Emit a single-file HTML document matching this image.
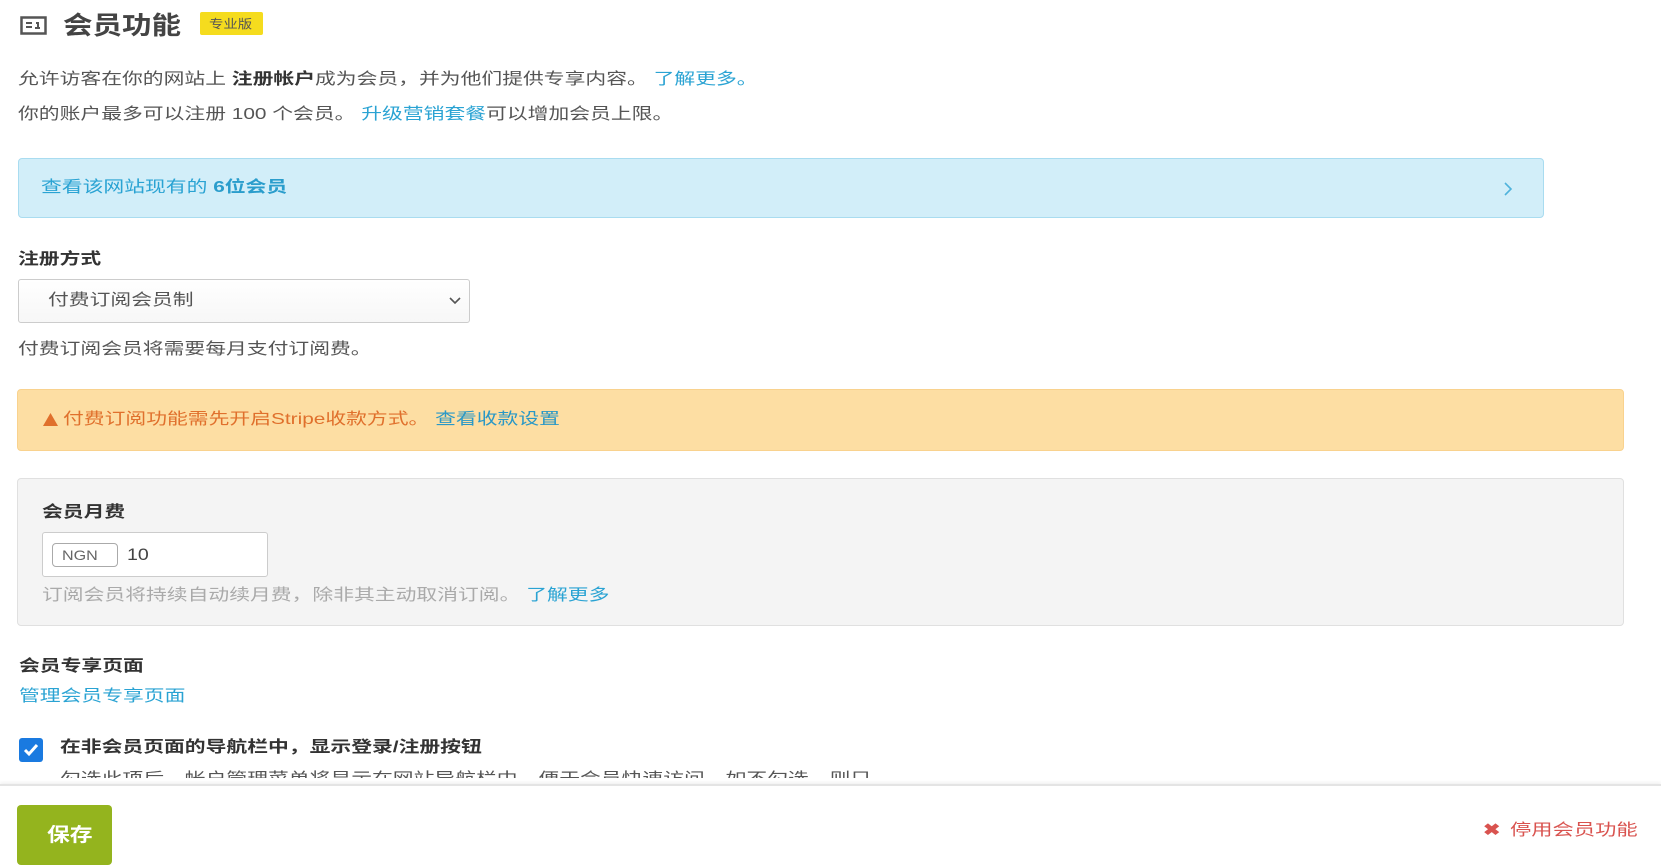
<!DOCTYPE html>
<html><head><meta charset="utf-8"><style>
*{margin:0;padding:0;box-sizing:border-box}
body{width:1661px;height:854px;overflow:hidden;background:#fff;position:relative;font-family:"Liberation Sans","Noto Sans CJK SC",sans-serif;color:#555;font-size:16px}
.a{position:absolute}
.t{position:absolute;white-space:nowrap;transform:scaleX(1.3);transform-origin:left center;line-height:20px}
.lk{color:#2aa3d3}
b{color:#333}
</style></head><body>
<svg class="a" style="left:20px;top:16px" width="27" height="19" viewBox="0 0 27 19"><rect x="1.5" y="1.5" width="24" height="16" fill="none" stroke="#555" stroke-width="2.5"/><path d="M6 7h6M6 11h6M16 7h2v5M15 12h5" stroke="#555" stroke-width="2" fill="none"/></svg>
<div class="t" style="left:63px;top:13px;font-size:25px;line-height:26px;font-weight:bold;color:#444;transform:scaleX(1.18)">会员功能</div>
<div class="a" style="left:200px;top:12px;width:63px;height:23px;background:#f5dc1e;border-radius:2px"></div>
<div class="t" style="left:209px;top:14px;font-size:12px;color:#555;transform:scaleX(1.2)">专业版</div>
<div class="t" style="left:18px;top:70px">允许访客在你的网站上 <b>注册帐户</b>成为会员，并为他们提供专享内容。 <span class="lk">了解更多。</span></div>
<div class="t" style="left:18px;top:105px">你的账户最多可以注册 100 个会员。 <span class="lk">升级营销套餐</span>可以增加会员上限。</div>
<div class="a" style="left:18px;top:158px;width:1526px;height:60px;background:#d2eef9;border:1px solid #a9dcf0;border-radius:4px"></div>
<div class="t" style="left:41px;top:178px;color:#2aa3d3">查看该网站现有的 <b style="color:#2a9dcc">6位会员</b></div>
<svg class="a" style="left:1503px;top:181px" width="10" height="16"><path d="M2 2l6 6-6 6" stroke="#4fb3dc" stroke-width="1.6" fill="none"/></svg>
<div class="t" style="left:18px;top:250px;font-weight:bold;color:#333">注册方式</div>
<div class="a" style="left:18px;top:279px;width:452px;height:44px;border:1px solid #ccc;border-radius:3px;background:linear-gradient(#fff,#f7f7f7)"></div>
<div class="t" style="left:48px;top:291px;color:#555">付费订阅会员制</div>
<svg class="a" style="left:449px;top:297px" width="12" height="8"><path d="M1 1l5 5 5-5" stroke="#555" stroke-width="1.6" fill="none"/></svg>
<div class="t" style="left:18px;top:340px">付费订阅会员将需要每月支付订阅费。</div>
<div class="a" style="left:17px;top:389px;width:1607px;height:62px;background:#fddea3;border:1px solid #f9d28e;border-radius:4px"></div>
<svg class="a" style="left:42px;top:412px" width="17" height="15"><path d="M8.5 1L16 14H1z" fill="#e0702c"/></svg>
<div class="t" style="left:63px;top:410px;color:#e0702c">付费订阅功能需先开启Stripe收款方式。 <span style="color:#2a98c6">查看收款设置</span></div>
<div class="a" style="left:17px;top:478px;width:1607px;height:148px;background:#f4f4f4;border:1px solid #e0e0e0;border-radius:4px"></div>
<div class="t" style="left:42px;top:503px;font-weight:bold;color:#333">会员月费</div>
<div class="a" style="left:42px;top:532px;width:226px;height:45px;background:#fff;border:1px solid #ccc;border-radius:3px"></div>
<div class="a" style="left:52px;top:543px;width:66px;height:24px;border:1px solid #aaa;border-radius:4px"></div>
<div class="t" style="left:62px;top:545px;font-size:14px;color:#666;transform:scaleX(1.15)">NGN</div>
<div class="t" style="left:127px;top:545px;font-size:17px;color:#444;transform:scaleX(1.15)">10</div>
<div class="t" style="left:42px;top:586px;color:#aaa">订阅会员将持续自动续月费，除非其主动取消订阅。 <span class="lk">了解更多</span></div>
<div class="t" style="left:19px;top:657px;font-weight:bold;color:#333">会员专享页面</div>
<div class="t" style="left:19px;top:687px" ><span class="lk">管理会员专享页面</span></div>
<div class="a" style="left:19px;top:738px;width:24px;height:24px;background:#1a7ae0;border-radius:3px"></div>
<svg class="a" style="left:22px;top:742px" width="18" height="16"><path d="M3 8l4 4 8-9" stroke="#fff" stroke-width="3" fill="none"/></svg>
<div class="t" style="left:60px;top:738px;font-weight:bold;color:#333">在非会员页面的导航栏中，显示登录/注册按钮</div>
<div class="a" style="left:0;top:770px;width:1661px;height:8px;overflow:hidden"><div class="t" style="left:60px;top:0">勾选此项后，帐户管理菜单将显示在网站导航栏中，便于会员快速访问。如不勾选，则只</div></div>
<div class="a" style="left:0;top:784px;width:1661px;height:70px;background:#fff;border-top:2px solid #e4e4e4;box-shadow:0 -2px 3px rgba(0,0,0,.05)"></div>
<div class="a" style="left:17px;top:805px;width:95px;height:60px;background:#94b41e;border-radius:4px"></div>
<div class="t" style="left:47px;top:826px;font-size:19px;font-weight:bold;color:#fff;transform:scaleX(1.2)">保存</div>
<div class="t" style="left:1483px;top:821px;color:#d9534f;font-weight:bold">✖</div>
<div class="t" style="left:1510px;top:821px;color:#d9534f;transform:scaleX(1.33)">停用会员功能</div>
</body></html>
